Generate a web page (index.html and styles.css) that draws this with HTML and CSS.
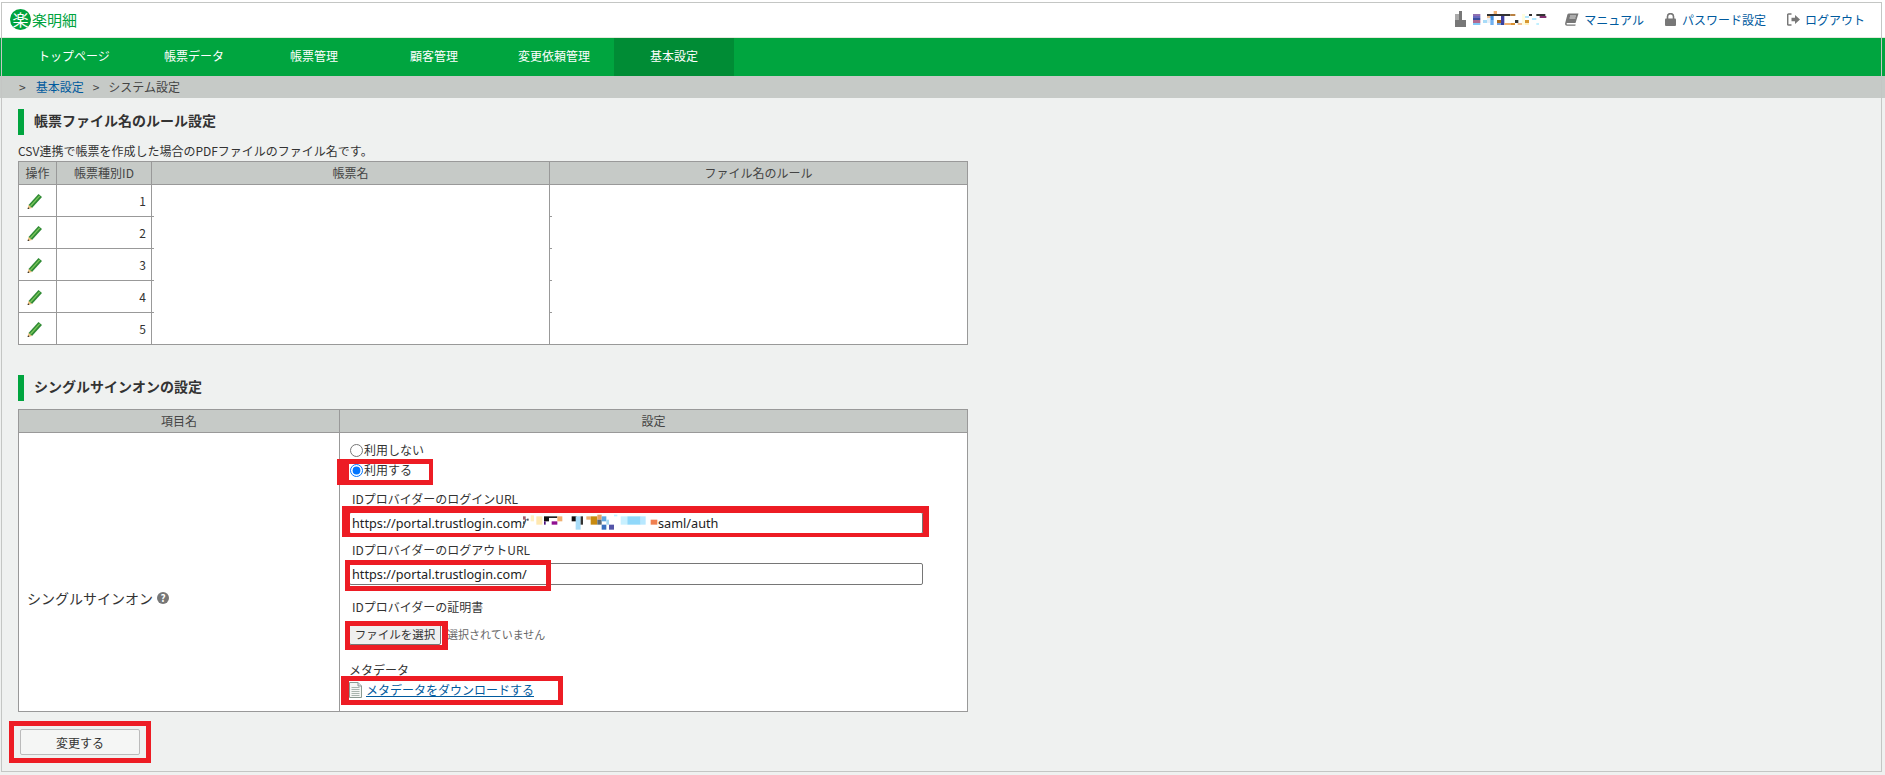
FILE: index.html
```html
<!DOCTYPE html>
<html lang="ja">
<head>
<meta charset="utf-8">
<title>システム設定</title>
<link rel="stylesheet" href="styles.css">
</head>
<body>
<div class="page">
  <header class="topbar">
    <div class="logo"><span class="logo-mark">楽</span><span class="logo-text">楽明細</span></div>
    <div class="usernav">
      <svg class="ic-building" width="11" height="16" viewBox="0 0 11 16"><rect x="4" width="3" height="9" fill="#777"/><rect y="3" width="4" height="6" fill="#aaa"/><rect y="9" width="11" height="7" fill="#777"/></svg>
      <svg class="mosaic-user" width="74" height="14" viewBox="78 18 222 42">
        <rect x="78" y="27" width="22" height="6" fill="#8f6fb0"/><rect x="78" y="33" width="22" height="6" fill="#6a6ac0"/><rect x="78" y="39" width="22" height="6" fill="#3a4f9f"/><rect x="78" y="45" width="22" height="9" fill="#b06a90"/><rect x="78" y="54" width="22" height="6" fill="#80c8f8"/>
        <rect x="120" y="27" width="70" height="6" fill="#333"/><rect x="190" y="27" width="15" height="6" fill="#b88040"/><rect x="140" y="18" width="10" height="9" fill="#f0b070"/>
        <rect x="120" y="33" width="10" height="6" fill="#f0c090"/><rect x="130" y="33" width="10" height="12" fill="#4090e0"/><rect x="108" y="45" width="12" height="9" fill="#a8dcf8"/><rect x="120" y="39" width="10" height="15" fill="#e8f0f8"/><rect x="130" y="45" width="10" height="15" fill="#70b0f0"/>
        <rect x="150" y="45" width="12" height="9" fill="#a86820"/><rect x="162" y="33" width="10" height="21" fill="#4040a0"/><rect x="150" y="54" width="12" height="6" fill="#70a0e0"/><rect x="162" y="54" width="10" height="6" fill="#3040a0"/><rect x="172" y="54" width="20" height="6" fill="#f0b070"/><rect x="192" y="54" width="12" height="6" fill="#d89030"/><rect x="204" y="45" width="10" height="9" fill="#333"/><rect x="212" y="54" width="13" height="6" fill="#f0c090"/>
        <rect x="225" y="27" width="9" height="33" fill="#fffde0"/><rect x="234" y="33" width="12" height="6" fill="#b0e8ff"/><rect x="234" y="45" width="12" height="9" fill="#d89830"/><rect x="234" y="54" width="12" height="6" fill="#fff0c0"/><rect x="246" y="27" width="9" height="6" fill="#333"/><rect x="255" y="39" width="13" height="6" fill="#b0e8ff"/><rect x="268" y="27" width="27" height="6" fill="#333"/><rect x="278" y="33" width="20" height="6" fill="#803070"/><rect x="268" y="54" width="8" height="6" fill="#c0f0ff"/>
      </svg>
      <a class="navlink" href="#"><svg class="ic-book" width="14" height="13" viewBox="0 0 14 13"><path d="M4 0.5h9.5L10.500 10H2.200c-.9 0-.9 1.500 0 1.500h8.500l-.4 1.200H2c-1.600 0-2.200-1.400-1.800-2.800L2.400 1.600C2.700.9 3.200.5 4 .5z" fill="#777"/><path d="M5 3h6M4.500 5h6" stroke="#fff" stroke-width=".8"/></svg>マニュアル</a>
      <a class="navlink" href="#"><svg class="ic-lock" width="11" height="13" viewBox="0 0 11 13"><path d="M2.500 6V3.600a3 3 0 0 1 6 0V6" fill="none" stroke="#777" stroke-width="1.6"/><rect y="5.500" width="11" height="7.500" rx="1" fill="#777"/></svg>パスワード設定</a>
      <a class="navlink" href="#"><svg class="ic-logout" width="13" height="13" viewBox="0 0 13 13"><path d="M4.500 1H1.500a.8.8 0 0 0-.8.8v9.400a.8.8 0 0 0 .8.8h3" fill="none" stroke="#777" stroke-width="1.5"/><path d="M4.500 4.800h3.500V2l5 4.500-5 4.500V8.200H4.500z" fill="#777"/></svg>ログアウト</a>
    </div>
  </header>

  <nav class="mainnav">
    <a class="tab" href="#">トップページ</a>
    <a class="tab" href="#">帳票データ</a>
    <a class="tab" href="#">帳票管理</a>
    <a class="tab" href="#">顧客管理</a>
    <a class="tab" href="#">変更依頼管理</a>
    <a class="tab active" href="#">基本設定</a>
  </nav>

  <div class="crumbs">
    <span>&gt;</span><a href="#">基本設定</a><span>&gt;</span><span>システム設定</span>
  </div>

  <main class="content">
    <h2 class="heading">帳票ファイル名のルール設定</h2>
    <p class="desc">CSV連携で帳票を作成した場合のPDFファイルのファイル名です。</p>
    <table class="grid rules">
      <colgroup><col class="c-op"><col class="c-id"><col class="c-name"><col class="c-rule"></colgroup>
      <thead><tr><th>操作</th><th>帳票種別ID</th><th>帳票名</th><th>ファイル名のルール</th></tr></thead>
      <tbody>
        <tr><td class="op"><svg class="pencil" width="16" height="16" viewBox="0 0 16 16"><path d="M1.500 12 11.500 1l3.500 3L5 15z" fill="#2f8a35"/><path d="M3 12.500 12.200 2.400l1 .9L4 13.400z" fill="#7cc85a"/><path d="M1.500 12 5 15 .8 16z" fill="#eebf78"/><path d="M1 14.300 2.500 15.600.6 16z" fill="#111"/></svg></td><td class="num">1</td><td class="blank"></td><td class="blank"></td></tr>
        <tr><td class="op"><svg class="pencil" width="16" height="16" viewBox="0 0 16 16"><path d="M1.500 12 11.500 1l3.500 3L5 15z" fill="#2f8a35"/><path d="M3 12.500 12.200 2.400l1 .9L4 13.400z" fill="#7cc85a"/><path d="M1.500 12 5 15 .8 16z" fill="#eebf78"/><path d="M1 14.300 2.500 15.600.6 16z" fill="#111"/></svg></td><td class="num">2</td><td class="blank"></td><td class="blank"></td></tr>
        <tr><td class="op"><svg class="pencil" width="16" height="16" viewBox="0 0 16 16"><path d="M1.500 12 11.500 1l3.500 3L5 15z" fill="#2f8a35"/><path d="M3 12.500 12.200 2.400l1 .9L4 13.400z" fill="#7cc85a"/><path d="M1.500 12 5 15 .8 16z" fill="#eebf78"/><path d="M1 14.300 2.500 15.600.6 16z" fill="#111"/></svg></td><td class="num">3</td><td class="blank"></td><td class="blank"></td></tr>
        <tr><td class="op"><svg class="pencil" width="16" height="16" viewBox="0 0 16 16"><path d="M1.500 12 11.500 1l3.500 3L5 15z" fill="#2f8a35"/><path d="M3 12.500 12.200 2.400l1 .9L4 13.400z" fill="#7cc85a"/><path d="M1.500 12 5 15 .8 16z" fill="#eebf78"/><path d="M1 14.300 2.500 15.600.6 16z" fill="#111"/></svg></td><td class="num">4</td><td class="blank"></td><td class="blank"></td></tr>
        <tr><td class="op"><svg class="pencil" width="16" height="16" viewBox="0 0 16 16"><path d="M1.500 12 11.500 1l3.500 3L5 15z" fill="#2f8a35"/><path d="M3 12.500 12.200 2.400l1 .9L4 13.400z" fill="#7cc85a"/><path d="M1.500 12 5 15 .8 16z" fill="#eebf78"/><path d="M1 14.300 2.500 15.600.6 16z" fill="#111"/></svg></td><td class="num">5</td><td class="last"></td><td class="last"></td></tr>
      </tbody>
    </table>

    <h2 class="heading heading-second">シングルサインオンの設定</h2>
    <table class="grid sso">
      <colgroup><col class="c-item"><col class="c-setting"></colgroup>
      <thead><tr><th>項目名</th><th>設定</th></tr></thead>
      <tbody>
        <tr>
          <td class="sso-name"><span class="sso-label">シングルサインオン<span class="help">?</span></span></td>
          <td class="sso-form">
            <label class="radio-row"><input type="radio" name="sso" class="radio">利用しない</label>
            <label class="radio-row"><input type="radio" name="sso" class="radio" checked>利用する</label>
            <div class="field-label first">IDプロバイダーのログインURL</div>
            <div class="input-wrap">
              <input class="text-input" type="text" value="https://portal.trustlogin.com/">
              <div class="input-tail">
                <svg width="136" height="18" viewBox="-21 28 408 54">
                  <rect x="-18" y="35" width="8" height="10" fill="#a06070"/><rect x="-18" y="50" width="6" height="8" fill="#555"/><rect x="-6" y="42" width="5" height="6" fill="#555"/>
                  <rect x="5" y="32" width="10" height="18" fill="#fff0c0"/><rect x="22" y="35" width="18" height="25" fill="#ffe8b0"/><rect x="45" y="35" width="15" height="15" fill="#111"/><rect x="60" y="35" width="25" height="5" fill="#222"/><rect x="45" y="50" width="5" height="10" fill="#4a1080"/><rect x="68" y="50" width="17" height="10" fill="#901090"/><rect x="85" y="35" width="15" height="15" fill="#f0b070"/>
                  <rect x="128" y="35" width="15" height="15" fill="#111"/><rect x="140" y="35" width="15" height="40" fill="#a8dcf8"/><rect x="155" y="35" width="7" height="25" fill="#333"/><rect x="172" y="35" width="13" height="10" fill="#f0b070"/><rect x="185" y="35" width="20" height="25" fill="#c88a10"/><rect x="205" y="30" width="13" height="15" fill="#e8a060"/><rect x="205" y="45" width="13" height="15" fill="#5a6a7a"/><rect x="218" y="35" width="14" height="15" fill="#60a8e0"/><rect x="218" y="60" width="14" height="15" fill="#3a70c0"/><rect x="240" y="60" width="15" height="15" fill="#5555a8"/><rect x="232" y="45" width="8" height="15" fill="#a8d8f0"/>
                  <rect x="255" y="30" width="10" height="5" fill="#c0f0ff"/><rect x="275" y="35" width="20" height="25" fill="#c8f0ff"/><rect x="295" y="35" width="40" height="25" fill="#90d8fa"/><rect x="335" y="35" width="15" height="25" fill="#b8e8ff"/><rect x="365" y="45" width="20" height="15" fill="#f08050"/>
                </svg>
                <span class="tail-text">saml/auth</span>
              </div>
            </div>
            <div class="field-label">IDプロバイダーのログアウトURL</div>
            <input class="text-input" type="text" value="https://portal.trustlogin.com/">
            <div class="field-label third">IDプロバイダーの証明書</div>
            <div class="file-row"><button class="file-btn" type="button">ファイルを選択</button><span class="file-status">選択されていません</span></div>
            <div class="field-label meta">メタデータ</div>
            <div class="download"><svg class="doc" width="13" height="16" viewBox="0 0 13 16"><path d="M.5.500h8.500l3.500 3.500v11.500H.5z" fill="#f4f6f4" stroke="#8a9a92"/><path d="M9 .5v3.500h3.500" fill="#dde" stroke="#8a9a92"/><path d="M2.500 5.500h8M2.500 7.500h8M2.500 9.500h8M2.500 11.500h8M2.500 13.500h8" stroke="#a8b4ae"/></svg><a href="#">メタデータをダウンロードする</a></div>
          </td>
        </tr>
      </tbody>
    </table>
    <button class="submit" type="button">変更する</button>
  </main>

  <div class="frame"></div>
  <div class="mark mark-radio"></div>
  <div class="mark mark-login"></div>
  <div class="mark mark-logout"></div>
  <div class="mark mark-file"></div>
  <div class="mark mark-link"></div>
  <div class="mark mark-submit"></div>
</div>
</body>
</html>
```

FILE: styles.css
```css
* { box-sizing: border-box; }
html, body { margin: 0; height: 100%; }
body {
  font-family: "Noto Sans CJK JP", "Noto Sans", sans-serif;
  font-size: 12px;
  color: #333;
  background: #eff1f0;
  overflow: hidden;
}
a { color: #005a9e; text-decoration: none; }

.page { position: relative; height: 775px; overflow: hidden; }

.frame {
  position: absolute;
  left: 1px; top: 2px; right: 3px; bottom: 3px;
  border: 1px solid #c4c6c4;
  pointer-events: none;
}

/* top bar */
.topbar {
  height: 38px;
  background: #fff;
  border-bottom: 1px solid #e6e8dc;
  display: flex;
  align-items: center;
  justify-content: space-between;
  padding: 2px 20px 0 10px;
}
.logo { display: flex; align-items: center; }
.logo-mark {
  width: 21px; height: 21px;
  border-radius: 50%;
  background: #00a33e;
  color: #fff;
  font-size: 16px;
  line-height: 21px;
  text-align: center;
}
.logo-text { font-size: 15px; line-height: 21px; color: #00a33e; margin-left: 1px; }
.usernav { display: flex; align-items: center; }
.ic-building { margin-right: 7px; margin-top: -1px; }
.mosaic-user { margin-right: 18px; margin-top: -3px; }
.navlink { display: flex; align-items: center; line-height: 16px; margin-right: 21px; }
.navlink:last-child { margin-right: 0; }
.ic-book { margin-right: 5px; }
.ic-lock { margin-right: 6px; }
.ic-logout { margin-right: 5px; }

/* main nav */
.mainnav {
  height: 38px;
  background: #00a53f;
  display: flex;
  padding-left: 14px;
}
.tab {
  width: 120px;
  color: #fff;
  text-align: center;
  line-height: 36px;
}
.tab.active { background: #008c35; }

/* breadcrumb */
.crumbs {
  height: 22px;
  background: #c6cac7;
  display: flex;
  align-items: center;
  gap: 9px;
  padding-left: 19px;
  color: #444;
  line-height: 22px;
}
.crumbs a { margin-left: 1px; }

/* content */
.content { padding: 11px 0 0 18px; }
.heading {
  margin: 0;
  height: 26px;
  line-height: 23px;
  font-size: 14px;
  font-weight: bold;
  border-left: 6px solid #00a53f;
  padding-left: 10px;
  color: #333;
}
.heading-second { margin-top: 30px; margin-bottom: 8px; }
.desc { margin: 9px 0 0; height: 17px; line-height: 14px; }

.grid {
  border-collapse: collapse;
  table-layout: fixed;
  width: 949px;
  background: #fff;
}
.grid th, .grid td { border: 1px solid #999; padding: 0; }
.grid th {
  height: 23px;
  background: #c6cac7;
  font-weight: normal;
  color: #444;
  line-height: 16px;
}
.c-op { width: 38px; }
.c-id { width: 95px; }
.c-name { width: 398px; }
.c-rule { width: 418px; }
.rules td { height: 32px; }
.op { text-align: center; }
.pencil { display: block; margin: 0 0 0 8px; }
.num { text-align: right; padding-right: 5px !important; }
.rules .blank {
  border-bottom: 0;
  border-top: 0;
  background: linear-gradient(#999, #999) left bottom / 2px 1px no-repeat;
}
.rules .last { border-top: 0; }

.c-item { width: 321px; }
.c-setting { width: 628px; }
.sso-name { padding: 52px 0 0 8px !important; vertical-align: middle; }
.sso-label { display: flex; align-items: center; font-size: 14px; line-height: 20px; }
.help {
  width: 12px; height: 12px;
  margin-left: 4px;
  border-radius: 50%;
  background: #777;
  color: #fff;
  font-size: 10px;
  font-weight: bold;
  line-height: 12px;
  text-align: center;
}
.sso-form { padding: 7px 0 13px 9px !important; vertical-align: top; }
.radio-row { display: flex; align-items: center; height: 20px; line-height: 20px; }
.radio { width: 13px; height: 13px; margin: 0 1px 0 1px; }
.field-label { height: 16px; line-height: 16px; margin: 8px 0 5px 3px; }
.field-label.first { margin-top: 11px; }
.field-label.third { margin-top: 14px; margin-bottom: 8px; }
.field-label.meta { margin: 17px 0 4px 0; }

.text-input {
  display: block;
  width: 574px;
  height: 22px;
  padding: 0 2px;
  border: 1px solid #767676;
  border-radius: 2px;
  background: #fff;
  font-family: "Noto Sans", sans-serif;
  font-size: 12.7px;
  color: #222;
}
.input-wrap { position: relative; width: 574px; }
.input-tail {
  position: absolute;
  left: 173px; top: 1px;
  height: 20px;
  display: flex;
  align-items: center;
}
.tail-text { font-family: "Noto Sans", sans-serif; font-size: 12.7px; color: #222; line-height: 20px; }

.file-row { display: flex; align-items: center; height: 22px; }
.file-btn {
  width: 92px; height: 21px;
  padding: 0;
  background: #efefef;
  border: 1px solid #767676;
  border-radius: 2px;
  font-family: "Noto Sans CJK JP", sans-serif;
  font-size: 11.5px;
  color: #333;
}
.file-status { margin-left: 6px; font-size: 11px; color: #666; }

.download { display: flex; align-items: center; height: 16px; }
.download a { text-decoration: underline; margin-left: 4px; line-height: 16px; }
.doc { display: block; }

.submit {
  display: block;
  margin: 17px 0 0 2px;
  width: 120px; height: 26px;
  padding: 0;
  background: #f5f6f5;
  border: 1px solid #bbb;
  border-radius: 2px;
  font-family: "Noto Sans CJK JP", sans-serif;
  font-size: 12px;
  color: #333;
}

/* red annotation boxes drawn over the screenshot */
.mark { position: absolute; border: 5px solid #ed1c24; pointer-events: none; }
.mark-radio { left: 337px; top: 459px; width: 96px; height: 26px; border-width: 5px 4px 5px 12px; }
.mark-login { left: 342px; top: 506px; width: 587px; height: 31px; border-width: 7px 6px 4px 8px; }
.mark-logout { left: 345px; top: 560px; width: 206px; height: 31px; }
.mark-file { left: 345px; top: 621px; width: 103px; height: 29px; border-right-width: 6px; }
.mark-link { left: 341px; top: 676px; width: 222px; height: 29px; border-left-width: 8px; }
.mark-submit { left: 9px; top: 721px; width: 142px; height: 42px; }
```
